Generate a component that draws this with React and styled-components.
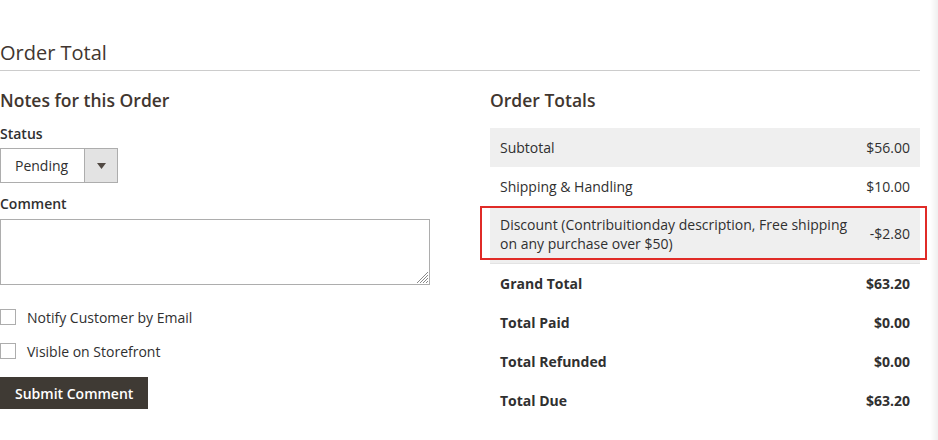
import React from "react";
import styled, { createGlobalStyle } from "styled-components";

const Global = createGlobalStyle`
  html, body { margin: 0; padding: 0; background: #fff; }
  body { font-family: "Open Sans", "Liberation Sans", sans-serif; color: #303030; font-size: 14px; }
  * { box-sizing: border-box; }
`;

const Page = styled.div`
  position: relative;
  width: 938px;
  height: 440px;
  overflow: hidden;
`;

const Shade = styled.div`
  position: absolute;
  top: 0;
  right: 0;
  width: 8px;
  height: 100%;
  background: linear-gradient(to right, rgba(240,240,240,0), #efefef);
`;

const Section = styled.section`
  width: 920px;
  padding-top: 38px;
`;

const SectionTitle = styled.h2`
  margin: 0;
  font-size: 20px;
  font-weight: 400;
  line-height: 30px;
  color: #41362f;
  padding-bottom: 2px;
  border-bottom: 1px solid #cccccc;
`;

const Columns = styled.div`
  display: grid;
  grid-template-columns: 440px 430px;
  column-gap: 50px;
  padding-top: 17px;
`;

const ColTitle = styled.h3`
  margin: 0 0 12px;
  font-size: 17.5px;
  font-weight: 600;
  line-height: 24px;
  color: #41362f;
`;

const Label = styled.label`
  display: block;
  font-weight: 600;
  font-size: 14px;
  line-height: 20px;
  color: #303030;
  margin-bottom: 4px;
`;

const Select = styled.div`
  display: flex;
  width: 118px;
  height: 35px;
  border: 1px solid #adadad;
  margin-bottom: 11px;
`;

const SelectValue = styled.div`
  flex: 1;
  display: flex;
  align-items: center;
  padding-left: 14px;
  font-size: 14px;
  color: #303030;
  border-right: 1px solid #adadad;
`;

const SelectArrow = styled.div`
  width: 32px;
  background: #e3e3e3;
  display: flex;
  align-items: center;
  justify-content: center;
`;

const TextArea = styled.div`
  position: relative;
  width: 430px;
  height: 66px;
  border: 1px solid #adadad;
  margin-top: 5px;
  margin-bottom: 22px;
`;

const Grip = styled.svg`
  position: absolute;
  right: 1px;
  bottom: 1px;
`;

const CheckRow = styled.div`
  display: flex;
  align-items: center;
  gap: 11px;
  height: 20px;
  margin-bottom: 14px;
  font-size: 14px;
  color: #303030;
  & + & { margin-top: 1px; }
`;

const Box = styled.span`
  width: 16px;
  height: 16px;
  border: 1px solid #adadad;
  background: #fff;
  display: inline-block;
`;

const Button = styled.button`
  margin-top: 2px;
  height: 32px;
  padding: 0 15px;
  background: #3f3a34;
  border: none;
  color: #fff;
  font-family: "Open Sans", "Liberation Sans", sans-serif;
  font-weight: 600;
  font-size: 14px;
`;

const Totals = styled.div`
  position: relative;
  display: flex;
  flex-direction: column;
  margin-top: 16px;
`;

const Row = styled.div`
  display: flex;
  justify-content: space-between;
  align-items: center;
  padding: 10px 10px;
  line-height: ${p => (p.$tight ? "18.5px" : "19px")};
  min-height: ${p => (p.$bold ? "38.7px" : "39px")};
  background: ${p => (p.$shaded ? "#efefef" : "#fff")};
  font-weight: ${p => (p.$bold ? 700 : 400)};
  border-bottom: ${p => (p.$line ? "1px solid #e3e3e3" : "none")};
  color: #303030;
`;

const RowLabel = styled.span`
  max-width: 352px;
`;

const RowValue = styled.span`
  white-space: nowrap;
`;

const Highlight = styled.div`
  position: absolute;
  left: -10px;
  top: 78px;
  width: 447px;
  height: 54px;
  border: 2px solid #e02b27;
  pointer-events: none;
`;

export default function App() {
  return (
    <Page>
      <Global />
      <Section>
        <SectionTitle>Order Total</SectionTitle>
        <Columns>
          <div>
            <ColTitle>Notes for this Order</ColTitle>
            <Label>Status</Label>
            <Select>
              <SelectValue>Pending</SelectValue>
              <SelectArrow>
                <svg width="9" height="6" viewBox="0 0 9 6">
                  <path d="M0 0 H9 L4.5 6 Z" fill="#514943" />
                </svg>
              </SelectArrow>
            </Select>
            <Label>Comment</Label>
            <TextArea>
              <Grip width="12" height="12" viewBox="0 0 12 12">
                <g stroke="#8a8a8a" strokeWidth="1">
                  <line x1="1" y1="12" x2="12" y2="1" />
                  <line x1="4" y1="12" x2="12" y2="4" />
                  <line x1="7" y1="12" x2="12" y2="7" />
                  <line x1="10" y1="12" x2="12" y2="10" />
                </g>
              </Grip>
            </TextArea>
            <CheckRow>
              <Box />
              Notify Customer by Email
            </CheckRow>
            <CheckRow>
              <Box />
              Visible on Storefront
            </CheckRow>
            <Button>Submit Comment</Button>
          </div>
          <div>
            <ColTitle>Order Totals</ColTitle>
            <Totals>
              <Row $shaded>
                <RowLabel>Subtotal</RowLabel>
                <RowValue>$56.00</RowValue>
              </Row>
              <Row>
                <RowLabel>Shipping &amp; Handling</RowLabel>
                <RowValue>$10.00</RowValue>
              </Row>
              <Row $shaded $line $tight>
                <RowLabel>Discount (Contribuitionday description, Free shipping on any purchase over $50)</RowLabel>
                <RowValue>-$2.80</RowValue>
              </Row>
              <Row $bold>
                <RowLabel>Grand Total</RowLabel>
                <RowValue>$63.20</RowValue>
              </Row>
              <Row $bold>
                <RowLabel>Total Paid</RowLabel>
                <RowValue>$0.00</RowValue>
              </Row>
              <Row $bold>
                <RowLabel>Total Refunded</RowLabel>
                <RowValue>$0.00</RowValue>
              </Row>
              <Row $bold>
                <RowLabel>Total Due</RowLabel>
                <RowValue>$63.20</RowValue>
              </Row>
              <Highlight />
            </Totals>
          </div>
        </Columns>
      </Section>
      <Shade />
    </Page>
  );
}
